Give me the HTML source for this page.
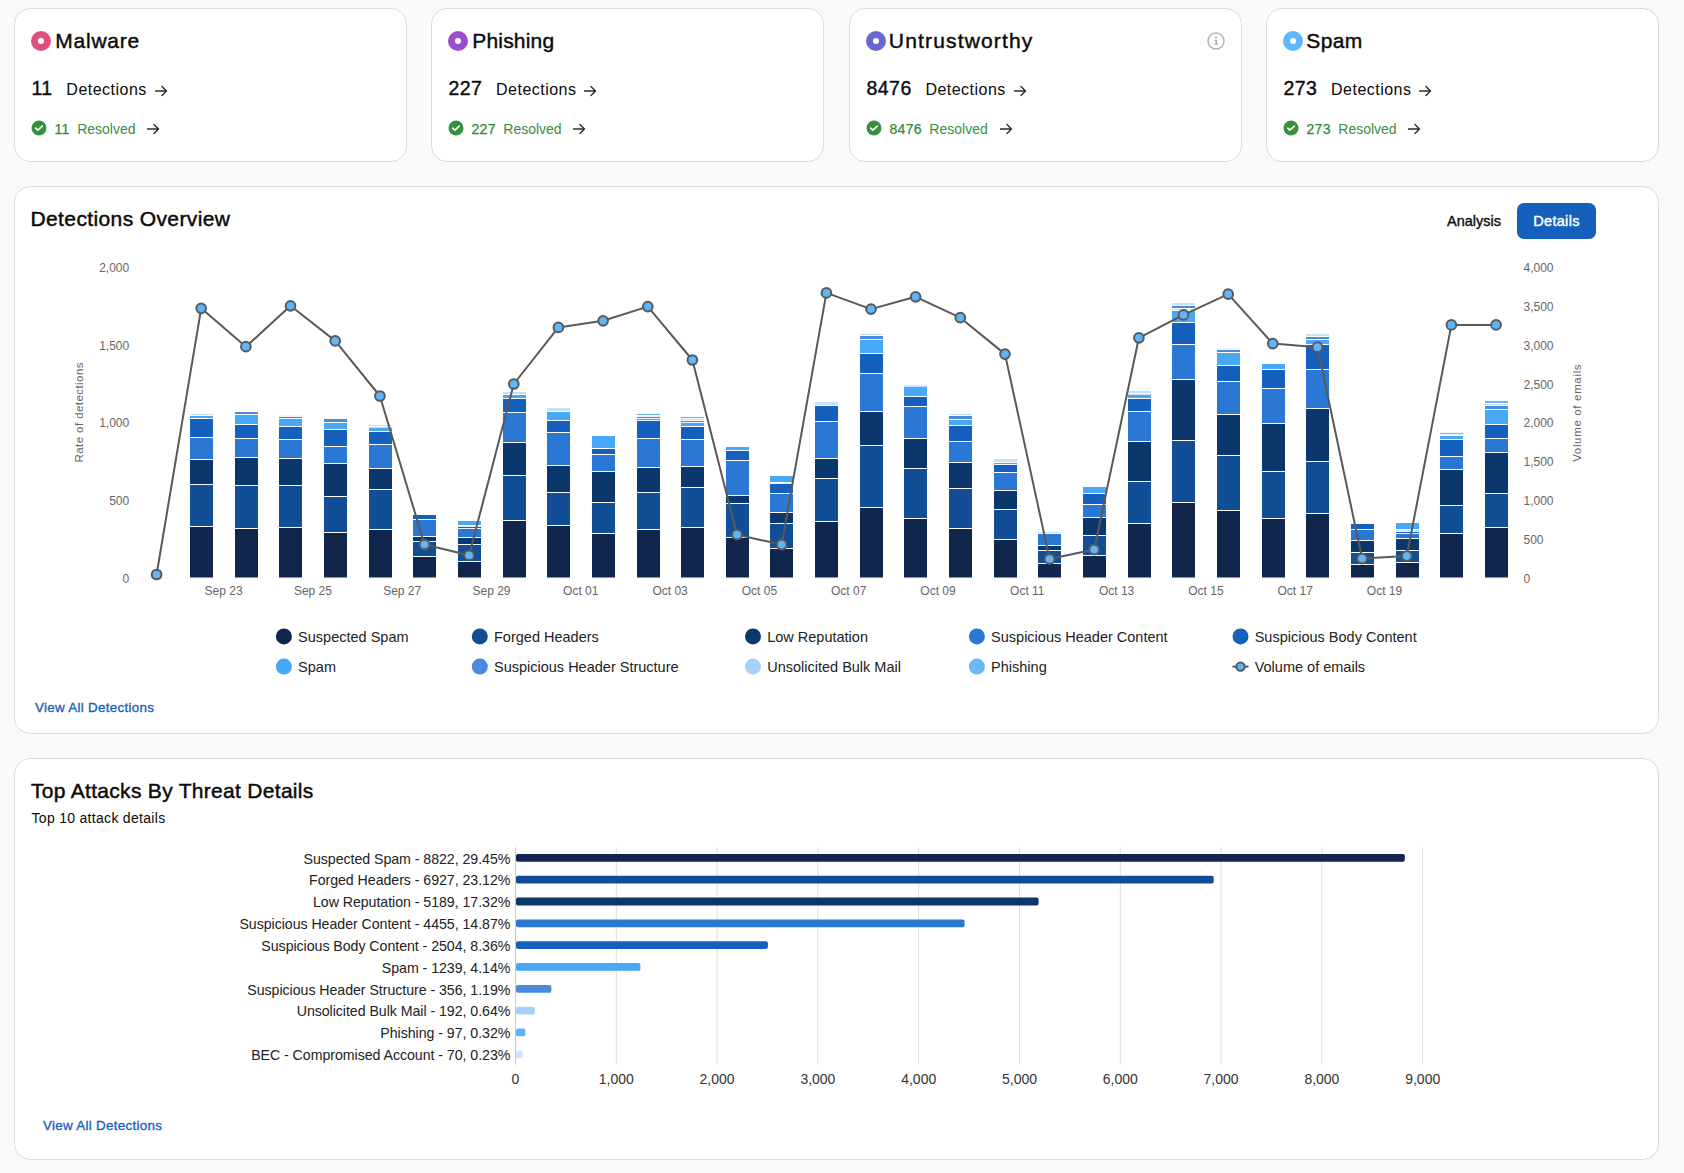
<!DOCTYPE html>
<html><head><meta charset="utf-8"><title>Detections</title>
<style>
*{box-sizing:border-box;margin:0;padding:0}
html,body{width:1684px;height:1173px;overflow:hidden;background:#fafafa;font-family:"Liberation Sans",sans-serif;color:#0a0a0a}
.card{position:absolute;top:8px;width:393px;height:154px;background:#fff;border:1px solid #dcdcdc;border-radius:16px}
.ico{position:absolute;left:16px;top:22px;width:20px;height:20px;border-radius:50%}
.ico i{position:absolute;left:7px;top:7px;width:6px;height:6px;border-radius:50%;background:#fff}
.ttl{position:absolute;left:40.3px;top:20.2px;font-size:21px;font-weight:normal;-webkit-text-stroke:0.45px #111;letter-spacing:0.75px;line-height:24px;white-space:nowrap}
.info{position:absolute;left:356.7px;top:22.6px}
.r2{position:absolute;left:16.5px;top:65.3px;height:28px;white-space:nowrap}
.num{letter-spacing:0.45px;font-size:19.5px;font-weight:normal;-webkit-text-stroke:0.4px #111;line-height:28px;vertical-align:baseline}
.det{font-size:16px;line-height:28px;margin-left:13.7px;vertical-align:baseline;letter-spacing:0.48px}
.r2 .arr{margin-left:8px;margin-top:10.3px;vertical-align:top}
.r3{position:absolute;left:16px;top:110px;height:20px;white-space:nowrap}
.chk{vertical-align:top;margin-top:1.4px;margin-left:-0.45px;margin-right:0.45px}
.rn{letter-spacing:0.3px;font-size:14px;font-weight:normal;-webkit-text-stroke:0.25px #2f8b3a;color:#2f8b3a;line-height:20px;margin-left:7.5px;vertical-align:top}
.res{font-size:14px;color:#3a8f45;line-height:20px;margin-left:7.5px;letter-spacing:0px;vertical-align:top}
.r3 .arr{margin-left:11.8px;margin-top:4px;vertical-align:top}
.panel{position:absolute;left:14px;width:1645px;background:#fff;border:1px solid #dcdcdc;border-radius:16px}
#p1{top:186px;height:548px}
#p2{top:758px;height:402px}
.h2{position:absolute;left:15.5px;font-size:21px;font-weight:normal;-webkit-text-stroke:0.45px #0a0a0a;letter-spacing:0.38px;line-height:24px;white-space:nowrap}
.sub{position:absolute;left:16.5px;top:49.8px;font-size:14px;line-height:18px;letter-spacing:0.3px}
.lnk{position:absolute;font-size:13.4px;font-weight:normal;-webkit-text-stroke:0.35px #1a62ba;letter-spacing:0.3px;color:#1a62ba;line-height:16px;white-space:nowrap}
.tab{position:absolute;top:16px;height:36px;line-height:37px;font-size:14.5px;font-weight:normal;-webkit-text-stroke:0.4px;text-align:center;white-space:nowrap}
svg.chart{position:absolute;left:0;top:0}
.ax{font-size:12px;fill:#666}
.axt{font-size:11.5px;fill:#666;letter-spacing:0.3px}
.lg{font-size:14.5px;fill:#222}
.ax2{font-size:14px;fill:#333}
.cat{font-size:14.2px;fill:#222;letter-spacing:-0.05px}
</style></head><body>
<div class="card" style="left:14px">
<span class="ico" style="background:#e0507f"><i></i></span><span class="ttl" style="letter-spacing:0.75px;margin-left:0px">Malware</span>
<div class="r2"><span class="num">11</span><span class="det">Detections</span><svg class="arr" width="13" height="12" viewBox="0 0 13 12"><path d="M0.5 6 H11.5 M7 1.5 L11.5 6 L7 10.5" fill="none" stroke="#2b2b2b" stroke-width="1.35" stroke-linecap="round" stroke-linejoin="round"/></svg></div>
<div class="r3"><svg class="chk" width="16" height="16" viewBox="0 0 16 16"><circle cx="8" cy="8" r="7.5" fill="#37903c"/><path d="M4.7 8.2 L6.8 10.2 L11.3 6.1" fill="none" stroke="#fff" stroke-width="1.6" stroke-linecap="round" stroke-linejoin="round"/></svg><span class="rn">11</span><span class="res">Resolved</span><svg class="arr" width="13" height="12" viewBox="0 0 13 12"><path d="M0.5 6 H11.5 M7 1.5 L11.5 6 L7 10.5" fill="none" stroke="#2b2b2b" stroke-width="1.35" stroke-linecap="round" stroke-linejoin="round"/></svg></div>
</div>
<div class="card" style="left:431px">
<span class="ico" style="background:#9b4dcb"><i></i></span><span class="ttl" style="letter-spacing:0.18px;margin-left:0px">Phishing</span>
<div class="r2"><span class="num">227</span><span class="det">Detections</span><svg class="arr" width="13" height="12" viewBox="0 0 13 12"><path d="M0.5 6 H11.5 M7 1.5 L11.5 6 L7 10.5" fill="none" stroke="#2b2b2b" stroke-width="1.35" stroke-linecap="round" stroke-linejoin="round"/></svg></div>
<div class="r3"><svg class="chk" width="16" height="16" viewBox="0 0 16 16"><circle cx="8" cy="8" r="7.5" fill="#37903c"/><path d="M4.7 8.2 L6.8 10.2 L11.3 6.1" fill="none" stroke="#fff" stroke-width="1.6" stroke-linecap="round" stroke-linejoin="round"/></svg><span class="rn">227</span><span class="res">Resolved</span><svg class="arr" width="13" height="12" viewBox="0 0 13 12"><path d="M0.5 6 H11.5 M7 1.5 L11.5 6 L7 10.5" fill="none" stroke="#2b2b2b" stroke-width="1.35" stroke-linecap="round" stroke-linejoin="round"/></svg></div>
</div>
<div class="card" style="left:849px">
<span class="ico" style="background:#6869d0"><i></i></span><span class="ttl" style="letter-spacing:1.17px;margin-left:-1.5px">Untrustworthy</span><svg class="info" width="18" height="18" viewBox="0 0 18 18"><circle cx="9" cy="9" r="8" fill="none" stroke="#b2b2b2" stroke-width="1.5"/><rect x="8.5" y="7.9" width="1.5" height="4.6" fill="#a8a8a8"/><rect x="7.5" y="7.9" width="2.5" height="1" fill="#a8a8a8"/><rect x="7.2" y="11.7" width="4" height="1" fill="#a8a8a8"/><circle cx="9" cy="5.5" r="0.95" fill="#a8a8a8"/></svg>
<div class="r2"><span class="num">8476</span><span class="det">Detections</span><svg class="arr" width="13" height="12" viewBox="0 0 13 12"><path d="M0.5 6 H11.5 M7 1.5 L11.5 6 L7 10.5" fill="none" stroke="#2b2b2b" stroke-width="1.35" stroke-linecap="round" stroke-linejoin="round"/></svg></div>
<div class="r3"><svg class="chk" width="16" height="16" viewBox="0 0 16 16"><circle cx="8" cy="8" r="7.5" fill="#37903c"/><path d="M4.7 8.2 L6.8 10.2 L11.3 6.1" fill="none" stroke="#fff" stroke-width="1.6" stroke-linecap="round" stroke-linejoin="round"/></svg><span class="rn">8476</span><span class="res">Resolved</span><svg class="arr" width="13" height="12" viewBox="0 0 13 12"><path d="M0.5 6 H11.5 M7 1.5 L11.5 6 L7 10.5" fill="none" stroke="#2b2b2b" stroke-width="1.35" stroke-linecap="round" stroke-linejoin="round"/></svg></div>
</div>
<div class="card" style="left:1266px">
<span class="ico" style="background:#5fb6fc"><i></i></span><span class="ttl" style="letter-spacing:0.38px;margin-left:-1px">Spam</span>
<div class="r2"><span class="num">273</span><span class="det">Detections</span><svg class="arr" width="13" height="12" viewBox="0 0 13 12"><path d="M0.5 6 H11.5 M7 1.5 L11.5 6 L7 10.5" fill="none" stroke="#2b2b2b" stroke-width="1.35" stroke-linecap="round" stroke-linejoin="round"/></svg></div>
<div class="r3"><svg class="chk" width="16" height="16" viewBox="0 0 16 16"><circle cx="8" cy="8" r="7.5" fill="#37903c"/><path d="M4.7 8.2 L6.8 10.2 L11.3 6.1" fill="none" stroke="#fff" stroke-width="1.6" stroke-linecap="round" stroke-linejoin="round"/></svg><span class="rn">273</span><span class="res">Resolved</span><svg class="arr" width="13" height="12" viewBox="0 0 13 12"><path d="M0.5 6 H11.5 M7 1.5 L11.5 6 L7 10.5" fill="none" stroke="#2b2b2b" stroke-width="1.35" stroke-linecap="round" stroke-linejoin="round"/></svg></div>
</div>
<div class="panel" id="p1">
<div class="h2" style="top:20px">Detections Overview</div>
<div class="tab" style="left:1431px;width:56px;color:#111">Analysis</div>
<div class="tab" style="left:1502px;width:79px;letter-spacing:0.3px;background:#1560bd;color:#fff;border-radius:7px">Details</div>
<div class="lnk" style="left:20px;top:512.5px">View All Detections</div>
</div>
<div class="panel" id="p2">
<div class="h2" style="top:20px;letter-spacing:0.3px;left:16px">Top Attacks By Threat Details</div>
<div class="sub">Top 10 attack details</div>
<div class="lnk" style="left:28px;top:358.5px">View All Detections</div>
</div>
<svg class="chart" width="1684" height="1173" viewBox="0 0 1684 1173" font-family="Liberation Sans, sans-serif">
<rect x="189.5" y="526.5" width="24" height="51.5" fill="#10264d" stroke="#fff" stroke-width="1"/>
<rect x="189.5" y="484.5" width="24" height="42" fill="#114e96" stroke="#fff" stroke-width="1"/>
<rect x="189.5" y="459.5" width="24" height="25" fill="#0b376d" stroke="#fff" stroke-width="1"/>
<rect x="189.5" y="437.5" width="24" height="22" fill="#2b77d4" stroke="#fff" stroke-width="1"/>
<rect x="189.5" y="418.5" width="24" height="19" fill="#1560bd" stroke="#fff" stroke-width="1"/>
<rect x="189.5" y="415.5" width="24" height="3" fill="#47a8f7" stroke="#fff" stroke-width="1"/>
<rect x="189.5" y="413.5" width="24" height="2" fill="#c6dffb" stroke="#fff" stroke-width="0.8"/>
<rect x="234.5" y="528.5" width="24" height="49.5" fill="#10264d" stroke="#fff" stroke-width="1"/>
<rect x="234.5" y="485.5" width="24" height="43" fill="#114e96" stroke="#fff" stroke-width="1"/>
<rect x="234.5" y="457.5" width="24" height="28" fill="#0b376d" stroke="#fff" stroke-width="1"/>
<rect x="234.5" y="438.5" width="24" height="19" fill="#2b77d4" stroke="#fff" stroke-width="1"/>
<rect x="234.5" y="424.5" width="24" height="14" fill="#1560bd" stroke="#fff" stroke-width="1"/>
<rect x="234.5" y="414.5" width="24" height="10" fill="#47a8f7" stroke="#fff" stroke-width="1"/>
<rect x="234.5" y="411.5" width="24" height="3" fill="#4a8ade" stroke="#fff" stroke-width="1"/>
<rect x="278.5" y="527.5" width="24" height="50.5" fill="#10264d" stroke="#fff" stroke-width="1"/>
<rect x="278.5" y="485.5" width="24" height="42" fill="#114e96" stroke="#fff" stroke-width="1"/>
<rect x="278.5" y="458.5" width="24" height="27" fill="#0b376d" stroke="#fff" stroke-width="1"/>
<rect x="278.5" y="439.5" width="24" height="19" fill="#2b77d4" stroke="#fff" stroke-width="1"/>
<rect x="278.5" y="426.5" width="24" height="13" fill="#1560bd" stroke="#fff" stroke-width="1"/>
<rect x="278.5" y="418.5" width="24" height="8" fill="#47a8f7" stroke="#fff" stroke-width="1"/>
<rect x="278.5" y="416.5" width="24" height="2" fill="#4a8ade" stroke="#fff" stroke-width="0.8"/>
<rect x="278.5" y="415.5" width="24" height="1" fill="#c6dffb" stroke="#fff" stroke-width="0.4"/>
<rect x="323.5" y="532.5" width="24" height="45.5" fill="#10264d" stroke="#fff" stroke-width="1"/>
<rect x="323.5" y="496.5" width="24" height="36" fill="#114e96" stroke="#fff" stroke-width="1"/>
<rect x="323.5" y="463.5" width="24" height="33" fill="#0b376d" stroke="#fff" stroke-width="1"/>
<rect x="323.5" y="446.5" width="24" height="17" fill="#2b77d4" stroke="#fff" stroke-width="1"/>
<rect x="323.5" y="429.5" width="24" height="17" fill="#1560bd" stroke="#fff" stroke-width="1"/>
<rect x="323.5" y="422.5" width="24" height="7" fill="#47a8f7" stroke="#fff" stroke-width="1"/>
<rect x="323.5" y="418.5" width="24" height="4" fill="#4a8ade" stroke="#fff" stroke-width="1"/>
<rect x="368.5" y="529.5" width="24" height="48.5" fill="#10264d" stroke="#fff" stroke-width="1"/>
<rect x="368.5" y="489.5" width="24" height="40" fill="#114e96" stroke="#fff" stroke-width="1"/>
<rect x="368.5" y="468.5" width="24" height="21" fill="#0b376d" stroke="#fff" stroke-width="1"/>
<rect x="368.5" y="444.5" width="24" height="24" fill="#2b77d4" stroke="#fff" stroke-width="1"/>
<rect x="368.5" y="431.5" width="24" height="13" fill="#1560bd" stroke="#fff" stroke-width="1"/>
<rect x="368.5" y="427.5" width="24" height="4" fill="#47a8f7" stroke="#fff" stroke-width="1"/>
<rect x="368.5" y="426.5" width="24" height="1" fill="#4a8ade" stroke="#fff" stroke-width="0.4"/>
<rect x="368.5" y="424.5" width="24" height="2" fill="#c6dffb" stroke="#fff" stroke-width="0.8"/>
<rect x="412.5" y="556.5" width="24" height="21.5" fill="#10264d" stroke="#fff" stroke-width="1"/>
<rect x="412.5" y="541.5" width="24" height="15" fill="#114e96" stroke="#fff" stroke-width="1"/>
<rect x="412.5" y="536.5" width="24" height="5" fill="#0b376d" stroke="#fff" stroke-width="1"/>
<rect x="412.5" y="519.5" width="24" height="17" fill="#2b77d4" stroke="#fff" stroke-width="1"/>
<rect x="412.5" y="514.5" width="24" height="5" fill="#1560bd" stroke="#fff" stroke-width="1"/>
<rect x="457.5" y="561.5" width="24" height="16.5" fill="#10264d" stroke="#fff" stroke-width="1"/>
<rect x="457.5" y="544.5" width="24" height="17" fill="#114e96" stroke="#fff" stroke-width="1"/>
<rect x="457.5" y="537.5" width="24" height="7" fill="#0b376d" stroke="#fff" stroke-width="1"/>
<rect x="457.5" y="528.5" width="24" height="9" fill="#2b77d4" stroke="#fff" stroke-width="1"/>
<rect x="457.5" y="526.5" width="24" height="2" fill="#1560bd" stroke="#fff" stroke-width="0.8"/>
<rect x="457.5" y="525.5" width="24" height="1" fill="#c6dffb" stroke="#fff" stroke-width="0.4"/>
<rect x="457.5" y="520.5" width="24" height="5" fill="#47a8f7" stroke="#fff" stroke-width="1"/>
<rect x="502.5" y="520.5" width="24" height="57.5" fill="#10264d" stroke="#fff" stroke-width="1"/>
<rect x="502.5" y="475.5" width="24" height="45" fill="#114e96" stroke="#fff" stroke-width="1"/>
<rect x="502.5" y="442.5" width="24" height="33" fill="#0b376d" stroke="#fff" stroke-width="1"/>
<rect x="502.5" y="412.5" width="24" height="30" fill="#2b77d4" stroke="#fff" stroke-width="1"/>
<rect x="502.5" y="398.5" width="24" height="14" fill="#1560bd" stroke="#fff" stroke-width="1"/>
<rect x="502.5" y="394.5" width="24" height="4" fill="#47a8f7" stroke="#fff" stroke-width="1"/>
<rect x="502.5" y="391.5" width="24" height="3" fill="#c6dffb" stroke="#fff" stroke-width="1"/>
<rect x="546.5" y="525.5" width="24" height="52.5" fill="#10264d" stroke="#fff" stroke-width="1"/>
<rect x="546.5" y="492.5" width="24" height="33" fill="#114e96" stroke="#fff" stroke-width="1"/>
<rect x="546.5" y="465.5" width="24" height="27" fill="#0b376d" stroke="#fff" stroke-width="1"/>
<rect x="546.5" y="432.5" width="24" height="33" fill="#2b77d4" stroke="#fff" stroke-width="1"/>
<rect x="546.5" y="420.5" width="24" height="12" fill="#1560bd" stroke="#fff" stroke-width="1"/>
<rect x="546.5" y="411.5" width="24" height="9" fill="#47a8f7" stroke="#fff" stroke-width="1"/>
<rect x="546.5" y="407.5" width="24" height="4" fill="#c6dffb" stroke="#fff" stroke-width="1"/>
<rect x="591.5" y="533.5" width="24" height="44.5" fill="#10264d" stroke="#fff" stroke-width="1"/>
<rect x="591.5" y="502.5" width="24" height="31" fill="#114e96" stroke="#fff" stroke-width="1"/>
<rect x="591.5" y="471.5" width="24" height="31" fill="#0b376d" stroke="#fff" stroke-width="1"/>
<rect x="591.5" y="454.5" width="24" height="17" fill="#2b77d4" stroke="#fff" stroke-width="1"/>
<rect x="591.5" y="448.5" width="24" height="6" fill="#1560bd" stroke="#fff" stroke-width="1"/>
<rect x="591.5" y="435.5" width="24" height="13" fill="#47a8f7" stroke="#fff" stroke-width="1"/>
<rect x="636.5" y="529.5" width="24" height="48.5" fill="#10264d" stroke="#fff" stroke-width="1"/>
<rect x="636.5" y="492.5" width="24" height="37" fill="#114e96" stroke="#fff" stroke-width="1"/>
<rect x="636.5" y="467.5" width="24" height="25" fill="#0b376d" stroke="#fff" stroke-width="1"/>
<rect x="636.5" y="438.5" width="24" height="29" fill="#2b77d4" stroke="#fff" stroke-width="1"/>
<rect x="636.5" y="420.5" width="24" height="18" fill="#1560bd" stroke="#fff" stroke-width="1"/>
<rect x="636.5" y="418.5" width="24" height="2" fill="#47a8f7" stroke="#fff" stroke-width="0.8"/>
<rect x="636.5" y="416.5" width="24" height="2" fill="#4a8ade" stroke="#fff" stroke-width="0.8"/>
<rect x="636.5" y="415.5" width="24" height="1" fill="#c6dffb" stroke="#fff" stroke-width="0.4"/>
<rect x="636.5" y="413.5" width="24" height="2" fill="#6bb8f7" stroke="#fff" stroke-width="0.8"/>
<rect x="680.5" y="527.5" width="24" height="50.5" fill="#10264d" stroke="#fff" stroke-width="1"/>
<rect x="680.5" y="487.5" width="24" height="40" fill="#114e96" stroke="#fff" stroke-width="1"/>
<rect x="680.5" y="466.5" width="24" height="21" fill="#0b376d" stroke="#fff" stroke-width="1"/>
<rect x="680.5" y="439.5" width="24" height="27" fill="#2b77d4" stroke="#fff" stroke-width="1"/>
<rect x="680.5" y="426.5" width="24" height="13" fill="#1560bd" stroke="#fff" stroke-width="1"/>
<rect x="680.5" y="422.5" width="24" height="4" fill="#47a8f7" stroke="#fff" stroke-width="1"/>
<rect x="680.5" y="420.5" width="24" height="2" fill="#4a8ade" stroke="#fff" stroke-width="0.8"/>
<rect x="680.5" y="418.5" width="24" height="2" fill="#c6dffb" stroke="#fff" stroke-width="0.8"/>
<rect x="680.5" y="416.5" width="24" height="2" fill="#6bb8f7" stroke="#fff" stroke-width="0.8"/>
<rect x="725.5" y="537.5" width="24" height="40.5" fill="#10264d" stroke="#fff" stroke-width="1"/>
<rect x="725.5" y="503.5" width="24" height="34" fill="#114e96" stroke="#fff" stroke-width="1"/>
<rect x="725.5" y="495.5" width="24" height="8" fill="#0b376d" stroke="#fff" stroke-width="1"/>
<rect x="725.5" y="460.5" width="24" height="35" fill="#2b77d4" stroke="#fff" stroke-width="1"/>
<rect x="725.5" y="450.5" width="24" height="10" fill="#1560bd" stroke="#fff" stroke-width="1"/>
<rect x="725.5" y="446.5" width="24" height="4" fill="#47a8f7" stroke="#fff" stroke-width="1"/>
<rect x="769.5" y="548.5" width="24" height="29.5" fill="#10264d" stroke="#fff" stroke-width="1"/>
<rect x="769.5" y="523.5" width="24" height="25" fill="#114e96" stroke="#fff" stroke-width="1"/>
<rect x="769.5" y="512.5" width="24" height="11" fill="#0b376d" stroke="#fff" stroke-width="1"/>
<rect x="769.5" y="493.5" width="24" height="19" fill="#2b77d4" stroke="#fff" stroke-width="1"/>
<rect x="769.5" y="483.5" width="24" height="10" fill="#1560bd" stroke="#fff" stroke-width="1"/>
<rect x="769.5" y="482.5" width="24" height="1" fill="#c6dffb" stroke="#fff" stroke-width="0.4"/>
<rect x="769.5" y="475.5" width="24" height="7" fill="#47a8f7" stroke="#fff" stroke-width="1"/>
<rect x="814.5" y="521.5" width="24" height="56.5" fill="#10264d" stroke="#fff" stroke-width="1"/>
<rect x="814.5" y="478.5" width="24" height="43" fill="#114e96" stroke="#fff" stroke-width="1"/>
<rect x="814.5" y="458.5" width="24" height="20" fill="#0b376d" stroke="#fff" stroke-width="1"/>
<rect x="814.5" y="421.5" width="24" height="37" fill="#2b77d4" stroke="#fff" stroke-width="1"/>
<rect x="814.5" y="405.5" width="24" height="16" fill="#1560bd" stroke="#fff" stroke-width="1"/>
<rect x="814.5" y="401.5" width="24" height="4" fill="#c6dffb" stroke="#fff" stroke-width="1"/>
<rect x="859.5" y="507.5" width="24" height="70.5" fill="#10264d" stroke="#fff" stroke-width="1"/>
<rect x="859.5" y="445.5" width="24" height="62" fill="#114e96" stroke="#fff" stroke-width="1"/>
<rect x="859.5" y="411.5" width="24" height="34" fill="#0b376d" stroke="#fff" stroke-width="1"/>
<rect x="859.5" y="373.5" width="24" height="38" fill="#2b77d4" stroke="#fff" stroke-width="1"/>
<rect x="859.5" y="353.5" width="24" height="20" fill="#1560bd" stroke="#fff" stroke-width="1"/>
<rect x="859.5" y="339.5" width="24" height="14" fill="#47a8f7" stroke="#fff" stroke-width="1"/>
<rect x="859.5" y="335.5" width="24" height="4" fill="#4a8ade" stroke="#fff" stroke-width="1"/>
<rect x="859.5" y="333.5" width="24" height="2" fill="#c6dffb" stroke="#fff" stroke-width="0.8"/>
<rect x="903.5" y="518.5" width="24" height="59.5" fill="#10264d" stroke="#fff" stroke-width="1"/>
<rect x="903.5" y="468.5" width="24" height="50" fill="#114e96" stroke="#fff" stroke-width="1"/>
<rect x="903.5" y="438.5" width="24" height="30" fill="#0b376d" stroke="#fff" stroke-width="1"/>
<rect x="903.5" y="406.5" width="24" height="32" fill="#2b77d4" stroke="#fff" stroke-width="1"/>
<rect x="903.5" y="396.5" width="24" height="10" fill="#1560bd" stroke="#fff" stroke-width="1"/>
<rect x="903.5" y="386.5" width="24" height="10" fill="#47a8f7" stroke="#fff" stroke-width="1"/>
<rect x="903.5" y="385.5" width="24" height="1" fill="#4a8ade" stroke="#fff" stroke-width="0.4"/>
<rect x="903.5" y="384.5" width="24" height="1" fill="#c6dffb" stroke="#fff" stroke-width="0.4"/>
<rect x="948.5" y="528.5" width="24" height="49.5" fill="#10264d" stroke="#fff" stroke-width="1"/>
<rect x="948.5" y="488.5" width="24" height="40" fill="#114e96" stroke="#fff" stroke-width="1"/>
<rect x="948.5" y="462.5" width="24" height="26" fill="#0b376d" stroke="#fff" stroke-width="1"/>
<rect x="948.5" y="441.5" width="24" height="21" fill="#2b77d4" stroke="#fff" stroke-width="1"/>
<rect x="948.5" y="425.5" width="24" height="16" fill="#1560bd" stroke="#fff" stroke-width="1"/>
<rect x="948.5" y="419.5" width="24" height="6" fill="#47a8f7" stroke="#fff" stroke-width="1"/>
<rect x="948.5" y="415.5" width="24" height="4" fill="#4a8ade" stroke="#fff" stroke-width="1"/>
<rect x="948.5" y="413.5" width="24" height="2" fill="#c6dffb" stroke="#fff" stroke-width="0.8"/>
<rect x="993.5" y="539.5" width="24" height="38.5" fill="#10264d" stroke="#fff" stroke-width="1"/>
<rect x="993.5" y="509.5" width="24" height="30" fill="#114e96" stroke="#fff" stroke-width="1"/>
<rect x="993.5" y="490.5" width="24" height="19" fill="#0b376d" stroke="#fff" stroke-width="1"/>
<rect x="993.5" y="472.5" width="24" height="18" fill="#2b77d4" stroke="#fff" stroke-width="1"/>
<rect x="993.5" y="464.5" width="24" height="8" fill="#1560bd" stroke="#fff" stroke-width="1"/>
<rect x="993.5" y="462.5" width="24" height="2" fill="#47a8f7" stroke="#fff" stroke-width="0.8"/>
<rect x="993.5" y="458.5" width="24" height="4" fill="#c6dffb" stroke="#fff" stroke-width="1"/>
<rect x="1037.5" y="563.5" width="24" height="14.5" fill="#10264d" stroke="#fff" stroke-width="1"/>
<rect x="1037.5" y="550.5" width="24" height="13" fill="#114e96" stroke="#fff" stroke-width="1"/>
<rect x="1037.5" y="545.5" width="24" height="5" fill="#0b376d" stroke="#fff" stroke-width="1"/>
<rect x="1037.5" y="533.5" width="24" height="12" fill="#2b77d4" stroke="#fff" stroke-width="1"/>
<rect x="1037.5" y="531.5" width="24" height="2" fill="#c6dffb" stroke="#fff" stroke-width="0.8"/>
<rect x="1082.5" y="555.5" width="24" height="22.5" fill="#10264d" stroke="#fff" stroke-width="1"/>
<rect x="1082.5" y="535.5" width="24" height="20" fill="#114e96" stroke="#fff" stroke-width="1"/>
<rect x="1082.5" y="517.5" width="24" height="18" fill="#0b376d" stroke="#fff" stroke-width="1"/>
<rect x="1082.5" y="504.5" width="24" height="13" fill="#2b77d4" stroke="#fff" stroke-width="1"/>
<rect x="1082.5" y="493.5" width="24" height="11" fill="#1560bd" stroke="#fff" stroke-width="1"/>
<rect x="1082.5" y="486.5" width="24" height="7" fill="#47a8f7" stroke="#fff" stroke-width="1"/>
<rect x="1127.5" y="523.5" width="24" height="54.5" fill="#10264d" stroke="#fff" stroke-width="1"/>
<rect x="1127.5" y="481.5" width="24" height="42" fill="#114e96" stroke="#fff" stroke-width="1"/>
<rect x="1127.5" y="441.5" width="24" height="40" fill="#0b376d" stroke="#fff" stroke-width="1"/>
<rect x="1127.5" y="411.5" width="24" height="30" fill="#2b77d4" stroke="#fff" stroke-width="1"/>
<rect x="1127.5" y="398.5" width="24" height="13" fill="#1560bd" stroke="#fff" stroke-width="1"/>
<rect x="1127.5" y="394.5" width="24" height="4" fill="#47a8f7" stroke="#fff" stroke-width="1"/>
<rect x="1127.5" y="393.5" width="24" height="1" fill="#4a8ade" stroke="#fff" stroke-width="0.4"/>
<rect x="1127.5" y="390.5" width="24" height="3" fill="#c6dffb" stroke="#fff" stroke-width="1"/>
<rect x="1171.5" y="502.5" width="24" height="75.5" fill="#10264d" stroke="#fff" stroke-width="1"/>
<rect x="1171.5" y="440.5" width="24" height="62" fill="#114e96" stroke="#fff" stroke-width="1"/>
<rect x="1171.5" y="379.5" width="24" height="61" fill="#0b376d" stroke="#fff" stroke-width="1"/>
<rect x="1171.5" y="344.5" width="24" height="35" fill="#2b77d4" stroke="#fff" stroke-width="1"/>
<rect x="1171.5" y="322.5" width="24" height="22" fill="#1560bd" stroke="#fff" stroke-width="1"/>
<rect x="1171.5" y="310.5" width="24" height="12" fill="#47a8f7" stroke="#fff" stroke-width="1"/>
<rect x="1171.5" y="308.5" width="24" height="2" fill="#c6dffb" stroke="#fff" stroke-width="0.8"/>
<rect x="1171.5" y="305.5" width="24" height="3" fill="#4a8ade" stroke="#fff" stroke-width="1"/>
<rect x="1171.5" y="302.5" width="24" height="3" fill="#c6dffb" stroke="#fff" stroke-width="1"/>
<rect x="1216.5" y="510.5" width="24" height="67.5" fill="#10264d" stroke="#fff" stroke-width="1"/>
<rect x="1216.5" y="455.5" width="24" height="55" fill="#114e96" stroke="#fff" stroke-width="1"/>
<rect x="1216.5" y="414.5" width="24" height="41" fill="#0b376d" stroke="#fff" stroke-width="1"/>
<rect x="1216.5" y="381.5" width="24" height="33" fill="#2b77d4" stroke="#fff" stroke-width="1"/>
<rect x="1216.5" y="365.5" width="24" height="16" fill="#1560bd" stroke="#fff" stroke-width="1"/>
<rect x="1216.5" y="352.5" width="24" height="13" fill="#47a8f7" stroke="#fff" stroke-width="1"/>
<rect x="1216.5" y="349.5" width="24" height="3" fill="#4a8ade" stroke="#fff" stroke-width="1"/>
<rect x="1216.5" y="348.5" width="24" height="1" fill="#c6dffb" stroke="#fff" stroke-width="0.4"/>
<rect x="1261.5" y="518.5" width="24" height="59.5" fill="#10264d" stroke="#fff" stroke-width="1"/>
<rect x="1261.5" y="471.5" width="24" height="47" fill="#114e96" stroke="#fff" stroke-width="1"/>
<rect x="1261.5" y="423.5" width="24" height="48" fill="#0b376d" stroke="#fff" stroke-width="1"/>
<rect x="1261.5" y="388.5" width="24" height="35" fill="#2b77d4" stroke="#fff" stroke-width="1"/>
<rect x="1261.5" y="369.5" width="24" height="19" fill="#1560bd" stroke="#fff" stroke-width="1"/>
<rect x="1261.5" y="363.5" width="24" height="6" fill="#47a8f7" stroke="#fff" stroke-width="1"/>
<rect x="1305.5" y="513.5" width="24" height="64.5" fill="#10264d" stroke="#fff" stroke-width="1"/>
<rect x="1305.5" y="461.5" width="24" height="52" fill="#114e96" stroke="#fff" stroke-width="1"/>
<rect x="1305.5" y="408.5" width="24" height="53" fill="#0b376d" stroke="#fff" stroke-width="1"/>
<rect x="1305.5" y="369.5" width="24" height="39" fill="#2b77d4" stroke="#fff" stroke-width="1"/>
<rect x="1305.5" y="344.5" width="24" height="25" fill="#1560bd" stroke="#fff" stroke-width="1"/>
<rect x="1305.5" y="339.5" width="24" height="5" fill="#47a8f7" stroke="#fff" stroke-width="1"/>
<rect x="1305.5" y="336.5" width="24" height="3" fill="#4a8ade" stroke="#fff" stroke-width="1"/>
<rect x="1305.5" y="333.5" width="24" height="3" fill="#c6dffb" stroke="#fff" stroke-width="1"/>
<rect x="1350.5" y="564.5" width="24" height="13.5" fill="#10264d" stroke="#fff" stroke-width="1"/>
<rect x="1350.5" y="552.5" width="24" height="12" fill="#114e96" stroke="#fff" stroke-width="1"/>
<rect x="1350.5" y="540.5" width="24" height="12" fill="#0b376d" stroke="#fff" stroke-width="1"/>
<rect x="1350.5" y="529.5" width="24" height="11" fill="#2b77d4" stroke="#fff" stroke-width="1"/>
<rect x="1350.5" y="523.5" width="24" height="6" fill="#1560bd" stroke="#fff" stroke-width="1"/>
<rect x="1395.5" y="562.5" width="24" height="15.5" fill="#10264d" stroke="#fff" stroke-width="1"/>
<rect x="1395.5" y="550.5" width="24" height="12" fill="#114e96" stroke="#fff" stroke-width="1"/>
<rect x="1395.5" y="538.5" width="24" height="12" fill="#0b376d" stroke="#fff" stroke-width="1"/>
<rect x="1395.5" y="533.5" width="24" height="5" fill="#2b77d4" stroke="#fff" stroke-width="1"/>
<rect x="1395.5" y="531.5" width="24" height="2" fill="#1560bd" stroke="#fff" stroke-width="0.8"/>
<rect x="1395.5" y="529.5" width="24" height="2" fill="#c6dffb" stroke="#fff" stroke-width="0.8"/>
<rect x="1395.5" y="522.5" width="24" height="7" fill="#47a8f7" stroke="#fff" stroke-width="1"/>
<rect x="1439.5" y="533.5" width="24" height="44.5" fill="#10264d" stroke="#fff" stroke-width="1"/>
<rect x="1439.5" y="505.5" width="24" height="28" fill="#114e96" stroke="#fff" stroke-width="1"/>
<rect x="1439.5" y="469.5" width="24" height="36" fill="#0b376d" stroke="#fff" stroke-width="1"/>
<rect x="1439.5" y="456.5" width="24" height="13" fill="#2b77d4" stroke="#fff" stroke-width="1"/>
<rect x="1439.5" y="439.5" width="24" height="17" fill="#1560bd" stroke="#fff" stroke-width="1"/>
<rect x="1439.5" y="435.5" width="24" height="4" fill="#47a8f7" stroke="#fff" stroke-width="1"/>
<rect x="1439.5" y="434.5" width="24" height="1" fill="#ffffff" stroke="#fff" stroke-width="0.4"/>
<rect x="1439.5" y="432.5" width="24" height="2" fill="#6bb8f7" stroke="#fff" stroke-width="0.8"/>
<rect x="1484.5" y="527.5" width="24" height="50.5" fill="#10264d" stroke="#fff" stroke-width="1"/>
<rect x="1484.5" y="493.5" width="24" height="34" fill="#114e96" stroke="#fff" stroke-width="1"/>
<rect x="1484.5" y="452.5" width="24" height="41" fill="#0b376d" stroke="#fff" stroke-width="1"/>
<rect x="1484.5" y="438.5" width="24" height="14" fill="#2b77d4" stroke="#fff" stroke-width="1"/>
<rect x="1484.5" y="424.5" width="24" height="14" fill="#1560bd" stroke="#fff" stroke-width="1"/>
<rect x="1484.5" y="409.5" width="24" height="15" fill="#47a8f7" stroke="#fff" stroke-width="1"/>
<rect x="1484.5" y="405.5" width="24" height="4" fill="#4a8ade" stroke="#fff" stroke-width="1"/>
<rect x="1484.5" y="403.5" width="24" height="2" fill="#c6dffb" stroke="#fff" stroke-width="0.8"/>
<rect x="1484.5" y="400.5" width="24" height="3" fill="#6bb8f7" stroke="#fff" stroke-width="1"/>
<line x1="145" y1="578.2" x2="168.5" y2="578.2" stroke="#e6eaf2" stroke-width="0.9"/>
<polyline points="156.6,574.5 201.2,308.3 245.9,346.7 290.5,305.8 335.2,340.9 379.9,396 424.5,544.5 469.1,555.3 513.8,384 558.4,327.4 603.1,320.8 647.8,306.6 692.4,360 737,534.7 781.7,544.6 826.4,292.9 871,309.1 915.6,296.8 960.3,317.7 1005,354.1 1049.6,559 1094.2,549.6 1138.9,337.8 1183.5,314.9 1228.2,294.2 1272.8,343.6 1317.5,347.2 1362.1,558.6 1406.8,556.1 1451.4,324.9 1496.1,324.9" fill="none" stroke="#595959" stroke-width="2" stroke-linejoin="round"/>
<circle cx="156.6" cy="574.5" r="4.85" fill="#5cb6f9" stroke="#595959" stroke-width="2"/>
<circle cx="201.2" cy="308.3" r="4.85" fill="#5cb6f9" stroke="#595959" stroke-width="2"/>
<circle cx="245.9" cy="346.7" r="4.85" fill="#5cb6f9" stroke="#595959" stroke-width="2"/>
<circle cx="290.5" cy="305.8" r="4.85" fill="#5cb6f9" stroke="#595959" stroke-width="2"/>
<circle cx="335.2" cy="340.9" r="4.85" fill="#5cb6f9" stroke="#595959" stroke-width="2"/>
<circle cx="379.9" cy="396" r="4.85" fill="#5cb6f9" stroke="#595959" stroke-width="2"/>
<circle cx="424.5" cy="544.5" r="4.85" fill="#5cb6f9" stroke="#595959" stroke-width="2"/>
<circle cx="469.1" cy="555.3" r="4.85" fill="#5cb6f9" stroke="#595959" stroke-width="2"/>
<circle cx="513.8" cy="384" r="4.85" fill="#5cb6f9" stroke="#595959" stroke-width="2"/>
<circle cx="558.4" cy="327.4" r="4.85" fill="#5cb6f9" stroke="#595959" stroke-width="2"/>
<circle cx="603.1" cy="320.8" r="4.85" fill="#5cb6f9" stroke="#595959" stroke-width="2"/>
<circle cx="647.8" cy="306.6" r="4.85" fill="#5cb6f9" stroke="#595959" stroke-width="2"/>
<circle cx="692.4" cy="360" r="4.85" fill="#5cb6f9" stroke="#595959" stroke-width="2"/>
<circle cx="737" cy="534.7" r="4.85" fill="#5cb6f9" stroke="#595959" stroke-width="2"/>
<circle cx="781.7" cy="544.6" r="4.85" fill="#5cb6f9" stroke="#595959" stroke-width="2"/>
<circle cx="826.4" cy="292.9" r="4.85" fill="#5cb6f9" stroke="#595959" stroke-width="2"/>
<circle cx="871" cy="309.1" r="4.85" fill="#5cb6f9" stroke="#595959" stroke-width="2"/>
<circle cx="915.6" cy="296.8" r="4.85" fill="#5cb6f9" stroke="#595959" stroke-width="2"/>
<circle cx="960.3" cy="317.7" r="4.85" fill="#5cb6f9" stroke="#595959" stroke-width="2"/>
<circle cx="1005" cy="354.1" r="4.85" fill="#5cb6f9" stroke="#595959" stroke-width="2"/>
<circle cx="1049.6" cy="559" r="4.85" fill="#5cb6f9" stroke="#595959" stroke-width="2"/>
<circle cx="1094.2" cy="549.6" r="4.85" fill="#5cb6f9" stroke="#595959" stroke-width="2"/>
<circle cx="1138.9" cy="337.8" r="4.85" fill="#5cb6f9" stroke="#595959" stroke-width="2"/>
<circle cx="1183.5" cy="314.9" r="4.85" fill="#5cb6f9" stroke="#595959" stroke-width="2"/>
<circle cx="1228.2" cy="294.2" r="4.85" fill="#5cb6f9" stroke="#595959" stroke-width="2"/>
<circle cx="1272.8" cy="343.6" r="4.85" fill="#5cb6f9" stroke="#595959" stroke-width="2"/>
<circle cx="1317.5" cy="347.2" r="4.85" fill="#5cb6f9" stroke="#595959" stroke-width="2"/>
<circle cx="1362.1" cy="558.6" r="4.85" fill="#5cb6f9" stroke="#595959" stroke-width="2"/>
<circle cx="1406.8" cy="556.1" r="4.85" fill="#5cb6f9" stroke="#595959" stroke-width="2"/>
<circle cx="1451.4" cy="324.9" r="4.85" fill="#5cb6f9" stroke="#595959" stroke-width="2"/>
<circle cx="1496.1" cy="324.9" r="4.85" fill="#5cb6f9" stroke="#595959" stroke-width="2"/>
<text x="129.2" y="582.9" text-anchor="end" class="ax">0</text>
<text x="129.2" y="505.1" text-anchor="end" class="ax">500</text>
<text x="129.2" y="427.4" text-anchor="end" class="ax">1,000</text>
<text x="129.2" y="349.6" text-anchor="end" class="ax">1,500</text>
<text x="129.2" y="271.9" text-anchor="end" class="ax">2,000</text>
<text x="1523.5" y="582.9" class="ax">0</text>
<text x="1523.5" y="544" class="ax">500</text>
<text x="1523.5" y="505.1" class="ax">1,000</text>
<text x="1523.5" y="466.3" class="ax">1,500</text>
<text x="1523.5" y="427.4" class="ax">2,000</text>
<text x="1523.5" y="388.5" class="ax">2,500</text>
<text x="1523.5" y="349.6" class="ax">3,000</text>
<text x="1523.5" y="310.8" class="ax">3,500</text>
<text x="1523.5" y="271.9" class="ax">4,000</text>
<text x="223.6" y="594.6" text-anchor="middle" class="ax">Sep 23</text>
<text x="312.9" y="594.6" text-anchor="middle" class="ax">Sep 25</text>
<text x="402.2" y="594.6" text-anchor="middle" class="ax">Sep 27</text>
<text x="491.5" y="594.6" text-anchor="middle" class="ax">Sep 29</text>
<text x="580.8" y="594.6" text-anchor="middle" class="ax">Oct 01</text>
<text x="670.1" y="594.6" text-anchor="middle" class="ax">Oct 03</text>
<text x="759.4" y="594.6" text-anchor="middle" class="ax">Oct 05</text>
<text x="848.7" y="594.6" text-anchor="middle" class="ax">Oct 07</text>
<text x="938" y="594.6" text-anchor="middle" class="ax">Oct 09</text>
<text x="1027.3" y="594.6" text-anchor="middle" class="ax">Oct 11</text>
<text x="1116.6" y="594.6" text-anchor="middle" class="ax">Oct 13</text>
<text x="1205.9" y="594.6" text-anchor="middle" class="ax">Oct 15</text>
<text x="1295.2" y="594.6" text-anchor="middle" class="ax">Oct 17</text>
<text x="1384.5" y="594.6" text-anchor="middle" class="ax">Oct 19</text>
<text transform="translate(83.2,412.3) rotate(-90)" text-anchor="middle" class="axt" style="letter-spacing:0.43px">Rate of detections</text>
<text transform="translate(1580.8,412.8) rotate(-90)" text-anchor="middle" class="axt" style="letter-spacing:0.66px">Volume of emails</text>
<circle cx="283.9" cy="636.4" r="8" fill="#10264d"/>
<text x="298.1" y="642" class="lg">Suspected Spam</text>
<circle cx="479.8" cy="636.4" r="8" fill="#114e96"/>
<text x="494" y="642" class="lg">Forged Headers</text>
<circle cx="753" cy="636.4" r="8" fill="#0b376d"/>
<text x="767.2" y="642" class="lg">Low Reputation</text>
<circle cx="976.9" cy="636.4" r="8" fill="#2b77d4"/>
<text x="991.1" y="642" class="lg">Suspicious Header Content</text>
<circle cx="1240.5" cy="636.4" r="8" fill="#1560bd"/>
<text x="1254.7" y="642" class="lg">Suspicious Body Content</text>
<circle cx="283.9" cy="666.6" r="8" fill="#47a8f7"/>
<text x="298.1" y="671.6" class="lg">Spam</text>
<circle cx="479.8" cy="666.6" r="8" fill="#4a8ade"/>
<text x="494" y="671.6" class="lg">Suspicious Header Structure</text>
<circle cx="753" cy="666.6" r="8" fill="#a8d1fa"/>
<text x="767.2" y="671.6" class="lg">Unsolicited Bulk Mail</text>
<circle cx="976.9" cy="666.6" r="8" fill="#6bb8f7"/>
<text x="991.1" y="671.6" class="lg">Phishing</text>
<line x1="1232.5" y1="666.6" x2="1248.5" y2="666.6" stroke="#595959" stroke-width="2"/>
<circle cx="1240.5" cy="666.6" r="4.2" fill="#5cb6f9" stroke="#595959" stroke-width="2"/>
<text x="1254.7" y="671.6" class="lg">Volume of emails</text>
<line x1="515.5" y1="847.3" x2="515.5" y2="1064.7" stroke="#c8c8c8" stroke-width="1"/>
<text x="515.5" y="1084" text-anchor="middle" class="ax2">0</text>
<line x1="616.3" y1="847.3" x2="616.3" y2="1064.7" stroke="#dedede" stroke-width="1"/>
<text x="616.3" y="1084" text-anchor="middle" class="ax2">1,000</text>
<line x1="717.1" y1="847.3" x2="717.1" y2="1064.7" stroke="#dedede" stroke-width="1"/>
<text x="717.1" y="1084" text-anchor="middle" class="ax2">2,000</text>
<line x1="817.9" y1="847.3" x2="817.9" y2="1064.7" stroke="#dedede" stroke-width="1"/>
<text x="817.9" y="1084" text-anchor="middle" class="ax2">3,000</text>
<line x1="918.7" y1="847.3" x2="918.7" y2="1064.7" stroke="#dedede" stroke-width="1"/>
<text x="918.7" y="1084" text-anchor="middle" class="ax2">4,000</text>
<line x1="1019.5" y1="847.3" x2="1019.5" y2="1064.7" stroke="#dedede" stroke-width="1"/>
<text x="1019.5" y="1084" text-anchor="middle" class="ax2">5,000</text>
<line x1="1120.3" y1="847.3" x2="1120.3" y2="1064.7" stroke="#dedede" stroke-width="1"/>
<text x="1120.3" y="1084" text-anchor="middle" class="ax2">6,000</text>
<line x1="1221.1" y1="847.3" x2="1221.1" y2="1064.7" stroke="#dedede" stroke-width="1"/>
<text x="1221.1" y="1084" text-anchor="middle" class="ax2">7,000</text>
<line x1="1321.9" y1="847.3" x2="1321.9" y2="1064.7" stroke="#dedede" stroke-width="1"/>
<text x="1321.9" y="1084" text-anchor="middle" class="ax2">8,000</text>
<line x1="1422.7" y1="847.3" x2="1422.7" y2="1064.7" stroke="#dedede" stroke-width="1"/>
<text x="1422.7" y="1084" text-anchor="middle" class="ax2">9,000</text>
<rect x="516" y="853.9" width="888.8" height="7.8" rx="1.9" fill="#10264d"/>
<text x="510.3" y="863.6" text-anchor="end" class="cat">Suspected Spam - 8822, 29.45%</text>
<rect x="516" y="875.7" width="697.7" height="7.8" rx="1.9" fill="#114e96"/>
<text x="510.3" y="885.4" text-anchor="end" class="cat">Forged Headers - 6927, 23.12%</text>
<rect x="516" y="897.6" width="522.6" height="7.8" rx="1.9" fill="#0b376d"/>
<text x="510.3" y="907.3" text-anchor="end" class="cat">Low Reputation - 5189, 17.32%</text>
<rect x="516" y="919.4" width="448.6" height="7.8" rx="1.9" fill="#2b77d4"/>
<text x="510.3" y="929.1" text-anchor="end" class="cat">Suspicious Header Content - 4455, 14.87%</text>
<rect x="516" y="941.2" width="251.9" height="7.8" rx="1.9" fill="#1560bd"/>
<text x="510.3" y="950.9" text-anchor="end" class="cat">Suspicious Body Content - 2504, 8.36%</text>
<rect x="516" y="963" width="124.4" height="7.8" rx="1.9" fill="#47a8f7"/>
<text x="510.3" y="972.7" text-anchor="end" class="cat">Spam - 1239, 4.14%</text>
<rect x="516" y="984.9" width="35.4" height="7.8" rx="1.9" fill="#4a8ade"/>
<text x="510.3" y="994.6" text-anchor="end" class="cat">Suspicious Header Structure - 356, 1.19%</text>
<rect x="516" y="1006.7" width="18.9" height="7.8" rx="1.9" fill="#a8d1fa"/>
<text x="510.3" y="1016.4" text-anchor="end" class="cat">Unsolicited Bulk Mail - 192, 0.64%</text>
<rect x="516" y="1028.5" width="9.3" height="7.8" rx="1.9" fill="#5fb1f5"/>
<text x="510.3" y="1038.2" text-anchor="end" class="cat">Phishing - 97, 0.32%</text>
<rect x="516" y="1050.4" width="6.6" height="7.8" rx="1.9" fill="#cfe4fb"/>
<text x="510.3" y="1060.1" text-anchor="end" class="cat">BEC - Compromised Account - 70, 0.23%</text>
</svg>
</body></html>
